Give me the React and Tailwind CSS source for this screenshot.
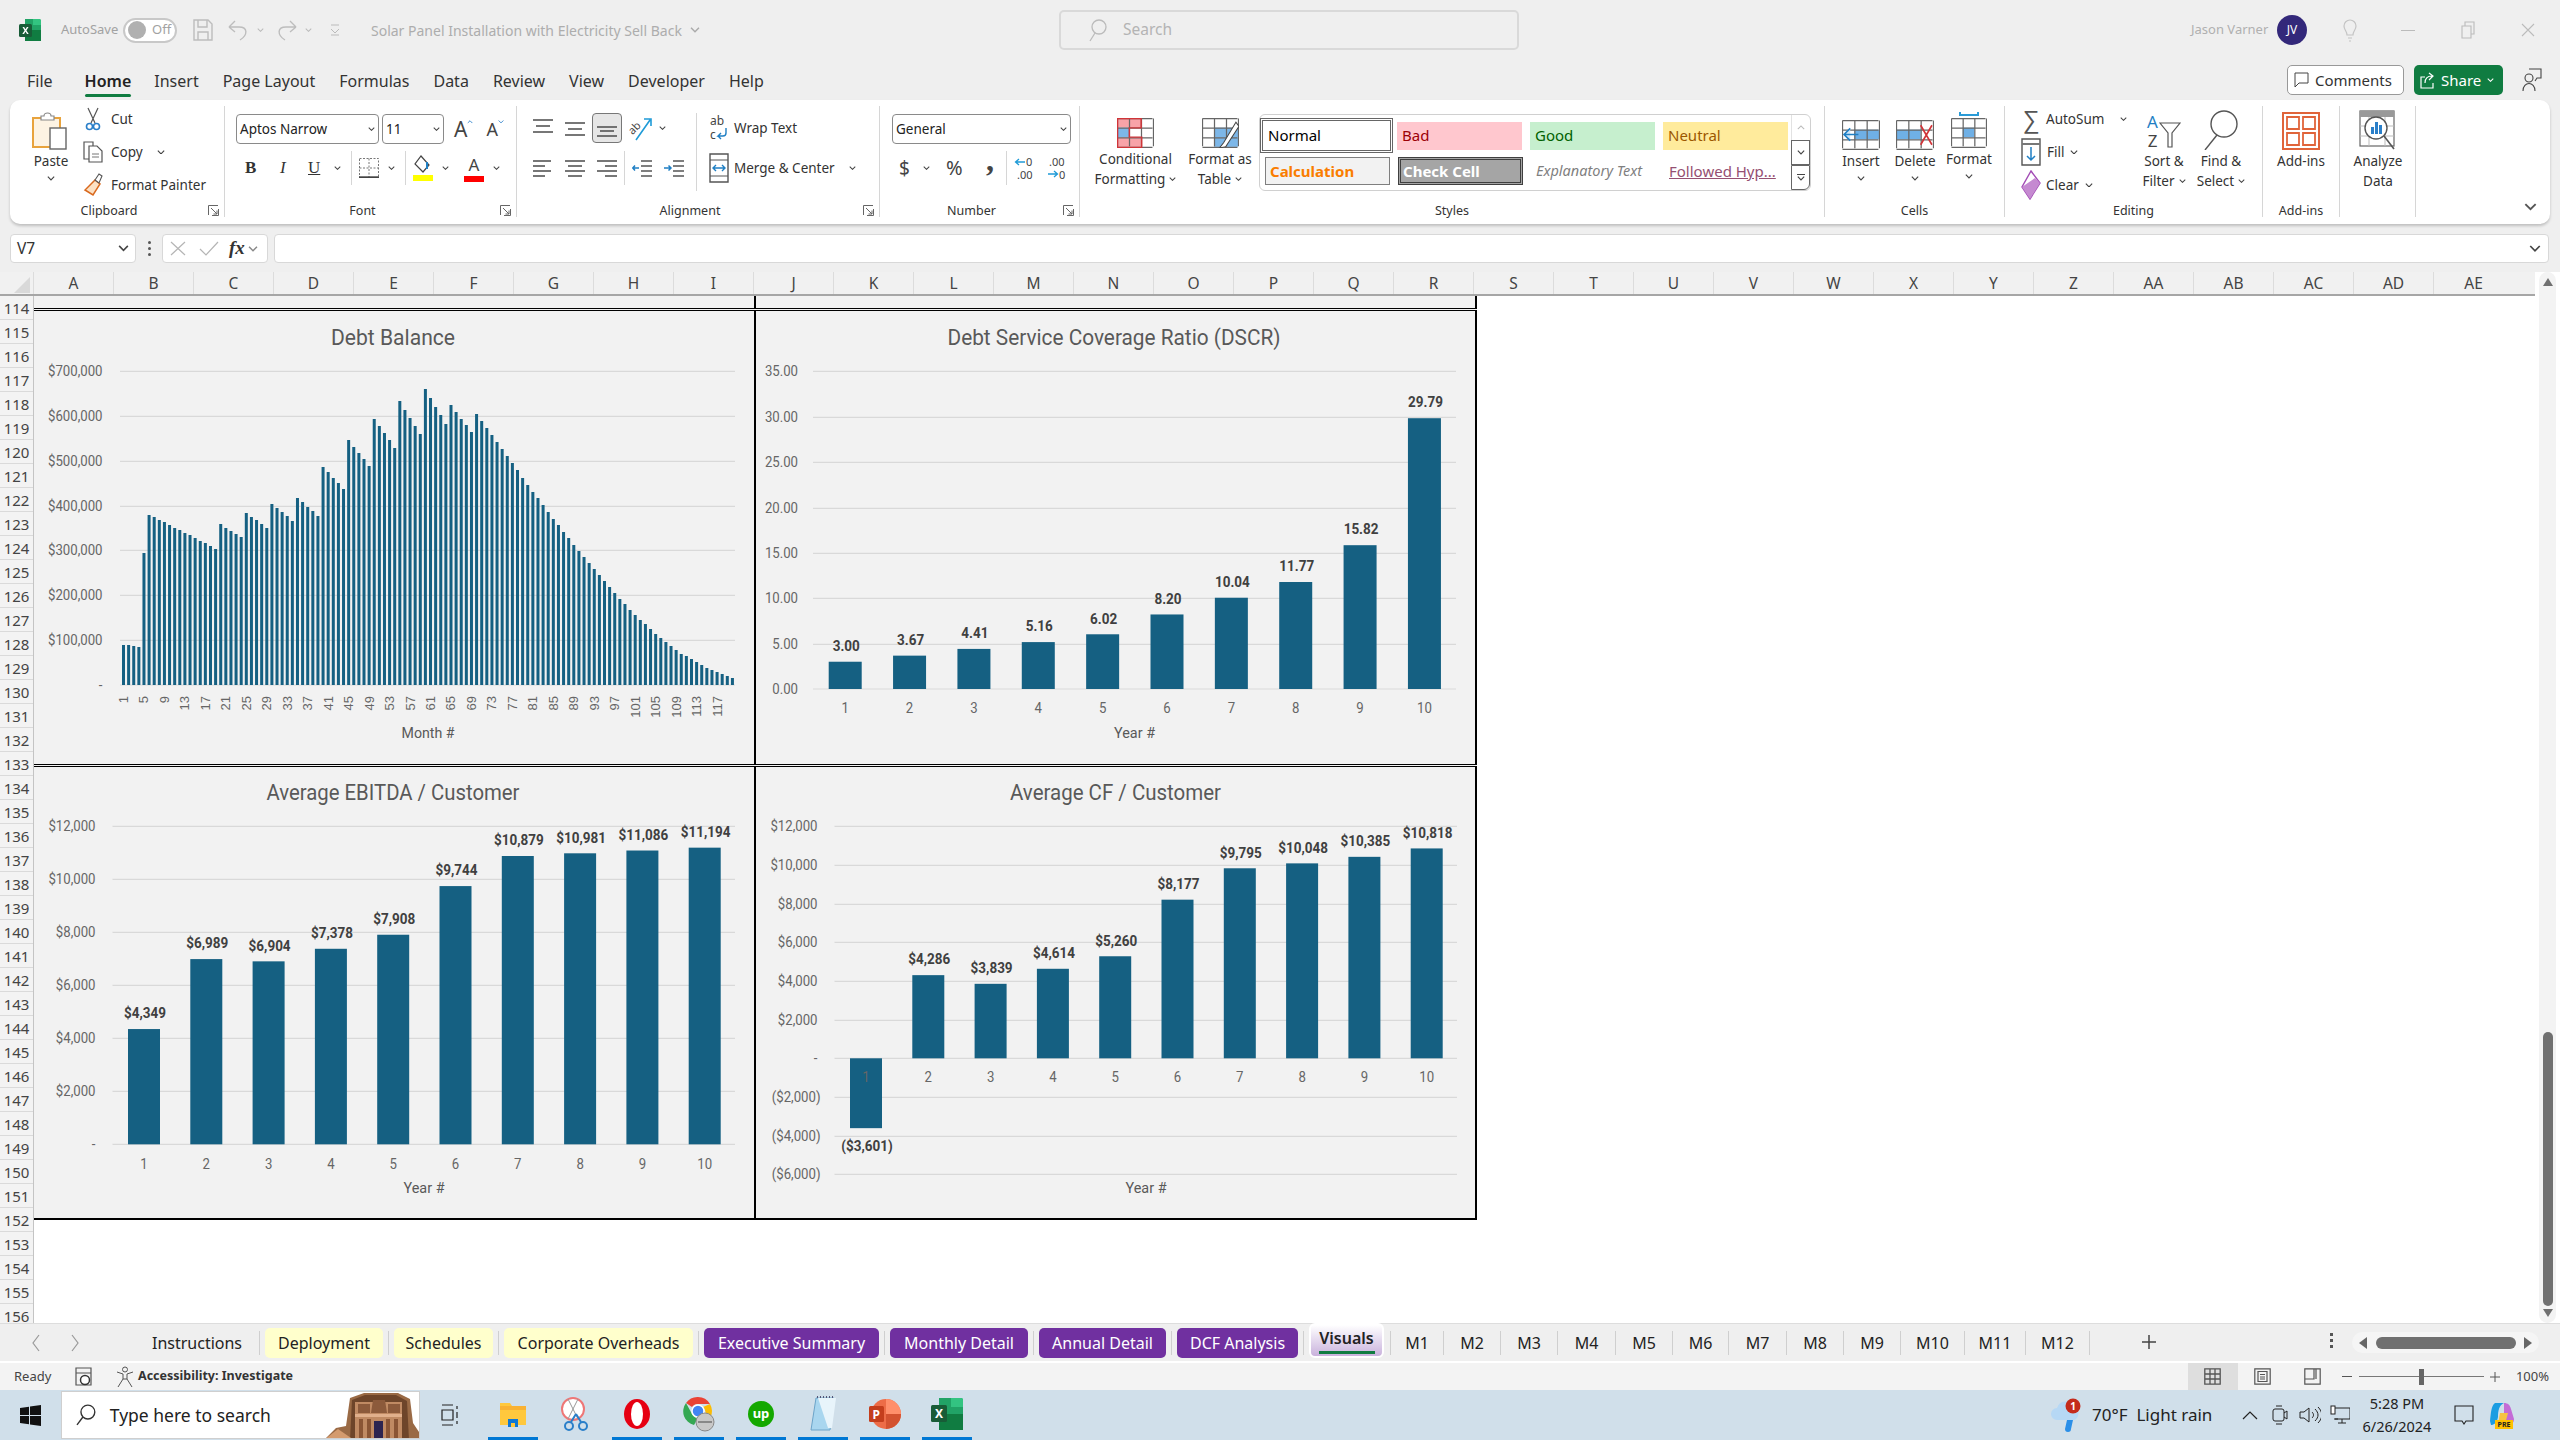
import { Fragment } from 'react';

const UI = "font-['Noto_Sans','Open_Sans',sans-serif]";
const CHART = "font-['Roboto','Liberation_Sans',sans-serif]";
const BAR = '#156082';

function Chev({ className = '', w = 8, color = '#444' }) {
  return (
    <svg width={w} height={w * 0.6} viewBox="0 0 8 5" className={className}>
      <path d="M.7.7 4 4 7.3.7" fill="none" stroke={color} strokeWidth="1.2" />
    </svg>
  );
}

function Launcher() {
  return (
    <svg width="11" height="11" viewBox="0 0 11 11" className="mb-[1px]">
      <path d="M.5 10V.5H10M10.5 4v6.5H4M3 3l6 6M5.5 9H9V5.5" fill="none" stroke="#666" strokeWidth="1" />
    </svg>
  );
}

function Group({ w, label, launcher, children, noLabel }) {
  return (
    <div style={{ width: w }} className="h-[111px] mt-[6px] border-r border-[#d6d6d6] flex flex-col shrink-0">
      <div className="h-[92px] flex">{children}</div>
      <div className="h-[19px] flex items-end">
        <div className="flex-1 text-center text-[12.5px] leading-[13px] text-[#333]">{noLabel ? '' : label}</div>
        {launcher && <div className="w-[16px] flex"><Launcher /></div>}
      </div>
    </div>
  );
}

function SmallRow({ icon, text, chev, gap = 8 }) {
  return (
    <div className="h-[26px] flex items-center">
      <div className="w-[20px] flex justify-center shrink-0">{icon}</div>
      <span style={{ marginLeft: gap }} className="text-[13.5px] text-[#333] whitespace-nowrap">{text}</span>
      {chev && <Chev className="shrink-0 ml-[6px]" />}
    </div>
  );
}

function BigButton({ w, icon, lines, chevBelow, noChev, top = 0, className = '' }) {
  return (
    <div style={{ width: w }} className={`flex flex-col items-center shrink-0 ${className}`}>
      <div style={{ height: 44, marginTop: top }} className="flex items-end justify-center">{icon}</div>
      <div className="text-[13.5px] leading-[20px] text-[#333] text-center mt-[1px] whitespace-nowrap">
        {lines.map((l, i) => (
          <div key={i} className="flex items-center justify-center gap-[4px]">
            {l}
            {i === lines.length - 1 && !chevBelow && !noChev && lines.length > 1 && <Chev w={7} />}
          </div>
        ))}
      </div>
      {chevBelow && <Chev w={8} className="mt-[5px]" />}
    </div>
  );
}

function Lines({ rows, stroke = '#555', w = 20, h = 18 }) {
  return (
    <svg width={w} height={h} viewBox={`0 0 ${w} ${h}`}>
      {rows.map(([y, x1, x2], i) => (
        <path key={i} d={`M${x1} ${y}H${x2}`} stroke={stroke} strokeWidth="1.6" />
      ))}
    </svg>
  );
}

function CellGrid({ w = 36, h = 30, cols = 3, rows = 3, fills = [], extra, className = '' }) {
  const cw = w / cols;
  const rh = h / rows;
  const lines = [];
  for (let i = 0; i <= cols; i++) lines.push(`M${i * cw + 0.5} 0.5V${h - 0.5}`);
  for (let i = 0; i <= rows; i++) lines.push(`M.5 ${i * rh + 0.5}H${w - 0.5}`);
  return (
    <svg width={w + 2} height={h + 2} viewBox={`0 0 ${w + 1} ${h + 1}`} className={className}>
      <rect width={w} height={h} fill="#fff" />
      {fills.map(([c, r, color, cs = 1, rs = 1], i) => (
        <rect key={i} x={c * cw} y={r * rh} width={cs * cw} height={rs * rh} fill={color} />
      ))}
      <path d={lines.join('')} stroke="#666" strokeWidth="1.2" fill="none" />
      {extra}
    </svg>
  );
}

function Ribbon() {
  return (
    <div className="mx-[10px] w-[2540px] h-[124px] bg-white rounded-[10px] shadow-[0_2px_3px_rgba(0,0,0,0.2)] flex relative">
      <Group w={215} label="Clipboard" launcher>
        <div className="w-[72px] pl-[6px]">
          <BigButton
            w={70}
            lines={['Paste']}
            chevBelow
            icon={
              <svg width="38" height="40" viewBox="0 0 38 40">
                <rect x="1" y="8" width="27" height="29" fill="#fdf3e3" stroke="#e8a33d" strokeWidth="2" />
                <path d="M9 10V6h3c0-4 7-4 7 0h3v4z" fill="#fff" stroke="#888" strokeWidth="1.2" />
                <rect x="18" y="18" width="16" height="21" fill="#fff" stroke="#666" strokeWidth="1.4" />
              </svg>
            }
          />
        </div>
        <div className="ml-[1px] flex flex-col gap-[7px]">
          <SmallRow
            text="Cut"
            icon={
              <svg width="16" height="24" viewBox="0 0 16 24">
                <path d="M3 1l7 15M13 1L6 16" stroke="#555" strokeWidth="1.2" />
                <circle cx="4.5" cy="19.5" r="3" fill="none" stroke="#2a7fc9" strokeWidth="1.6" />
                <circle cx="11.5" cy="19.5" r="3" fill="none" stroke="#2a7fc9" strokeWidth="1.6" />
              </svg>
            }
          />
          <div className="flex items-center">
            <SmallRow
              text="Copy"
              icon={
                <svg width="20" height="22" viewBox="0 0 20 22">
                  <path d="M1 1h9v17H1z" fill="#fff" stroke="#555" strokeWidth="1.2" />
                  <path d="M6 5h8l5 5v11H6z" fill="#fff" stroke="#555" strokeWidth="1.2" />
                  <path d="M9 13h7M9 16h7" stroke="#777" />
                </svg>
              }
            />
            <Chev className="ml-[14px]" />
          </div>
          <SmallRow
            text="Format Painter"
            icon={
              <svg width="20" height="24" viewBox="0 0 20 24">
                <path d="M12 7l5 4-7 11-8-5z" fill="#fce1c4" stroke="#d9691e" strokeWidth="1.5" />
                <path d="M12 7l4-6 3 2-3 7z" fill="#fff" stroke="#555" strokeWidth="1.1" />
              </svg>
            }
          />
        </div>
      </Group>

      <Group w={292} label="Font" launcher>
        <div className="flex flex-col pl-[11px] pt-[8px] gap-[9px]">
          <div className="flex items-center h-[30px]">
            <div className="w-[143px] h-[30px] border border-[#8a8a8a] rounded-[4px] flex items-center justify-between px-[3px] text-[13.5px] text-[#222]">
              Aptos Narrow
              <Chev w={7} />
            </div>
            <div className="ml-[3px] w-[62px] h-[30px] border border-[#8a8a8a] rounded-[4px] flex items-center justify-between px-[3px] text-[13.5px] text-[#222]">
              11
              <Chev w={7} />
            </div>
            <span className="ml-[10px] text-[21px] leading-[28px] text-[#444]">A</span>
            <Chev w={6} color="#2a7fc9" className="rotate-180 -mt-[14px]" />
            <span className="ml-[13px] text-[18px] leading-[26px] text-[#444]">A</span>
            <Chev w={6} color="#2a7fc9" className="-mt-[14px]" />
          </div>
          <div className="flex items-center h-[30px] pl-[9px] text-[#333]">
            <span className="w-[35px] font-['Liberation_Serif',serif] font-bold text-[17px]">B</span>
            <span className="w-[28px] font-['Liberation_Serif',serif] italic text-[17px]">I</span>
            <span className="w-[26px] font-['Liberation_Serif',serif] underline text-[17px]">U</span>
            <Chev w={7} className="mr-[10px]" />
            <div className="w-px h-[34px] bg-[#d6d6d6] mr-[7px]" />
            <svg width="20" height="20" viewBox="0 0 20 20" className="mr-[9px]">
              <path d="M.5.5h19v19H.5zM10 .5v19M.5 10h19" fill="none" stroke="#777" strokeDasharray="2 1.5" />
              <path d="M0 19.2h20" stroke="#444" strokeWidth="1.8" />
            </svg>
            <Chev w={7} className="mr-[10px]" />
            <div className="w-px h-[34px] bg-[#d6d6d6] mr-[6px]" />
            <svg width="22" height="28" viewBox="0 0 22 28" className="mr-[8px]">
              <path d="M9 2l8 9-6 7-8-8z" fill="#fff" stroke="#444" strokeWidth="1.2" />
              <path d="M15 8v7" stroke="#1f7fc4" strokeWidth="2" />
              <rect x="1" y="21" width="20" height="6" fill="#ffff00" />
            </svg>
            <Chev w={7} className="mr-[15px]" />
            <div className="flex flex-col items-center w-[20px] mr-[9px]">
              <span className="text-[17px] leading-[22px] text-[#444]">A</span>
              <div className="w-[20px] h-[6px] bg-[#ff0000]" />
            </div>
            <Chev w={7} />
          </div>
        </div>
      </Group>

      <Group w={363} label="Alignment" launcher>
        <div className="w-[179px] shrink-0 flex flex-col pl-[16px] pt-[7px] gap-[10px]">
          <div className="flex items-center h-[30px]">
            <Lines rows={[[1, 0, 20], [7, 3, 17], [13, 0, 20]]} />
            <div className="ml-[12px]"><Lines rows={[[4, 0, 20], [10, 3, 17], [16, 0, 20]]} /></div>
            <div className="ml-[7px] w-[30px] h-[30px] border border-[#777] rounded-[4px] bg-[#e6e6e6] flex items-center justify-center">
              <Lines rows={[[8, 0, 20], [12, 3, 17], [17, 0, 20]]} />
            </div>
            <svg width="26" height="26" viewBox="0 0 26 26" className="ml-[6px] overflow-visible">
              <text x="1" y="16" transform="rotate(-45 8 14)" className="text-[11px] fill-[#444]">ab</text>
              <path d="M8 25L22 5M16 4h7v7" fill="none" stroke="#1f9bd7" strokeWidth="1.6" />
            </svg>
            <Chev w={7} className="ml-[5px]" />
          </div>
          <div className="flex items-center h-[30px]">
            <Lines rows={[[2, 0, 18], [7, 0, 12], [12, 0, 18], [17, 0, 12]]} />
            <div className="ml-[12px]"><Lines rows={[[2, 0, 20], [7, 3, 17], [12, 0, 20], [17, 3, 17]]} /></div>
            <div className="ml-[12px]"><Lines rows={[[2, 0, 20], [7, 8, 20], [12, 0, 20], [17, 8, 20]]} /></div>
            <div className="w-px h-[34px] bg-[#d6d6d6] mx-[7px]" />
            <svg width="20" height="18" viewBox="0 0 20 18">
              <path d="M9 2h11M9 7h11M9 12h11M9 17h11" stroke="#555" strokeWidth="1.5" />
              <path d="M7 9H1M3 6.5 .8 9 3 11.5" fill="none" stroke="#1f7fc4" strokeWidth="1.5" />
            </svg>
            <svg width="20" height="18" viewBox="0 0 20 18" className="ml-[12px]">
              <path d="M9 2h11M9 7h11M9 12h11M9 17h11" stroke="#555" strokeWidth="1.5" />
              <path d="M0 9h6M4.5 6.5 7 9l-2.500 2.500" fill="none" stroke="#1f7fc4" strokeWidth="1.5" />
            </svg>
          </div>
        </div>
        <div className="w-px h-[78px] mt-[7px] bg-[#d6d6d6] shrink-0" />
        <div className="flex flex-col pl-[12px] pt-[7px] gap-[10px]">
          <div className="flex items-center h-[30px]">
            <svg width="20" height="28" viewBox="0 0 20 28" className="overflow-visible">
              <text x="1" y="11" className="text-[12px] fill-[#444]">ab</text>
              <text x="1" y="25" className="text-[12px] fill-[#444]">c</text>
              <path d="M17 14v5a3 3 0 0 1-3 3H9l3-3M9 22l3 3" fill="none" stroke="#1f7fc4" strokeWidth="1.4" />
            </svg>
            <span className="ml-[5px] text-[13.5px] text-[#333]">Wrap Text</span>
          </div>
          <div className="flex items-center h-[30px]">
            <svg width="20" height="32" viewBox="0 0 20 32">
              <path d="M1 2h18v28H1z" fill="#fff" stroke="#555" strokeWidth="1.4" />
              <path d="M1 8h18M1 24h18" stroke="#555" />
              <path d="M4 16h12M7 13l-3 3 3 3M13 13l3 3-3 3" fill="none" stroke="#1f7fc4" strokeWidth="1.4" />
            </svg>
            <span className="ml-[5px] text-[13.5px] text-[#333] whitespace-nowrap">Merge &amp; Center</span>
            <Chev w={7} className="ml-[14px]" />
          </div>
        </div>
      </Group>

      <Group w={200} label="Number" launcher>
        <div className="flex flex-col pl-[12px] pt-[8px] gap-[9px]">
          <div className="w-[179px] h-[30px] border border-[#8a8a8a] rounded-[4px] flex items-center justify-between px-[3px] text-[13.5px] text-[#222]">
            General
            <Chev w={7} />
          </div>
          <div className="flex items-center h-[30px] pl-[7px] text-[#444]">
            <span className="w-[24px] text-[19px]">$</span>
            <Chev w={7} className="mr-[16px]" />
            <span className="w-[40px] text-[20px]">%</span>
            <span className="w-[20px] -mt-[16px] font-['Liberation_Serif',serif] font-bold text-[32px] leading-[36px]">,</span>
            <div className="w-px h-[34px] bg-[#d6d6d6] mr-[7px]" />
            <svg width="22" height="26" viewBox="0 0 22 26" className="mr-[10px]">
              <text x="12" y="11" className="text-[11px] fill-[#444]">0</text>
              <text x="3" y="24" className="text-[11px] fill-[#444]">.00</text>
              <path d="M11 7H2M5 4 1.500 7 5 10" fill="none" stroke="#1f9bd7" strokeWidth="1.3" />
            </svg>
            <svg width="22" height="26" viewBox="0 0 22 26">
              <text x="3" y="11" className="text-[11px] fill-[#444]">.00</text>
              <text x="13" y="24" className="text-[11px] fill-[#444]">0</text>
              <path d="M2 19h9M8 16l3.500 3L8 22" fill="none" stroke="#1f9bd7" strokeWidth="1.3" />
            </svg>
          </div>
        </div>
      </Group>

      <Group w={745} label="Styles">
        <BigButton
          w={83}
          className="ml-[14px]"
          top={-2}
          lines={['Conditional', 'Formatting']}
          icon={
            <CellGrid
              w={35}
              h={28}
              fills={[[0, 0, '#f8a3a8', 2, 1], [0, 1, '#7db7e8'], [0, 2, '#f8a3a8', 2, 1]]}
              extra={<path d="M.5.5h23v9H12v9h12v10H.5z" fill="none" stroke="#d13438" strokeWidth="1.4" />}
            />
          }
        />
        <BigButton
          w={70}
          className="ml-[8px] mr-[4px]"
          top={-2}
          lines={['Format as', 'Table']}
          icon={
            <CellGrid
              w={35}
              h={28}
              fills={[[1, 1, '#7db7e8', 2, 1], [1, 2, '#7db7e8', 2, 1]]}
              extra={<path d="M33 4 21 24l-4 5 6-1L36 8z" fill="#fff" stroke="#444" strokeWidth="1" />}
            />
          }
        />
        <div className="w-[552px] h-[77px] mt-[8px] border border-[#d0d0d0] rounded-[6px] flex text-[15px]">
          <div className="flex-1 flex flex-col">
            <div className="flex items-center h-[41px]">
              <div className="w-[133px] h-[35px] border-[3px] border-double border-[#666] bg-white flex items-center pl-[5px] text-black">Normal</div>
              <div className="ml-[4px] w-[125px] h-[28px] bg-[#ffc7ce] text-[#9c0006] flex items-center pl-[5px]">Bad</div>
              <div className="ml-[8px] w-[125px] h-[28px] bg-[#c6efce] text-[#006100] flex items-center pl-[5px]">Good</div>
              <div className="ml-[8px] w-[125px] h-[28px] bg-[#ffeb9c] text-[#9c5700] flex items-center pl-[5px]">Neutral</div>
            </div>
            <div className="flex items-center h-[28px] mt-[1px]">
              <div className="ml-[5px] w-[125px] h-[28px] bg-[#f2f2f2] border border-[#7f7f7f] text-[#fa7d00] font-bold flex items-center pl-[4px]">Calculation</div>
              <div className="ml-[8px] w-[125px] h-[28px] bg-[#a5a5a5] border-[3px] border-double border-[#3f3f3f] text-white font-bold flex items-center pl-[2px]">Check Cell</div>
              <div className="ml-[8px] w-[125px] h-[28px] text-[#7f7f7f] italic flex items-center pl-[5px] text-[14.5px] whitespace-nowrap">Explanatory Text</div>
              <div className="ml-[8px] w-[125px] h-[28px] text-[#954f72] underline flex items-center pl-[5px] whitespace-nowrap">Followed Hyp...</div>
            </div>
          </div>
          <div className="w-[19px] flex flex-col">
            <div className="h-[25px] border-l border-[#e2e2e2] flex items-center justify-center"><Chev w={8} color="#bbb" className="rotate-180" /></div>
            <div className="h-[25px] border border-[#666] flex items-center justify-center"><Chev w={8} /></div>
            <div className="flex-1 border border-[#666] rounded-br-[6px] flex flex-col items-center justify-center gap-[1px]">
              <div className="w-[8px] h-px bg-[#444]" />
              <Chev w={8} />
            </div>
          </div>
        </div>
      </Group>

      <Group w={180} label="Cells">
        <BigButton
          w={54}
          className="ml-[9px]"
          lines={['Insert']}
          chevBelow
          icon={
            <CellGrid
              w={36}
              h={28}
              fills={[[1, 1, '#6fb0e6', 2, 1]]}
              extra={<path d="M16 14H2M8 8l-6 6 6 6" fill="#cfe6f9" stroke="#1f7fc4" strokeWidth="1.6" />}
            />
          }
        />
        <BigButton
          w={54}
          lines={['Delete']}
          chevBelow
          icon={
            <CellGrid
              w={36}
              h={28}
              fills={[[0, 1, '#6fb0e6', 2, 1]]}
              extra={<path d="M24 5l11 19M35 5 24 24" stroke="#d13438" strokeWidth="1.6" />}
            />
          }
        />
        <BigButton
          w={54}
          lines={['Format']}
          chevBelow
          top={-2}
          icon={
            <div className="flex flex-col items-center gap-[2px]">
              <div className="w-[20px] h-[4px] border-x-2 border-b-2 border-[#2a9bd7]" />
              <CellGrid w={34} h={28} fills={[[1, 1, '#6fb0e6', 1, 1]]} />
            </div>
          }
        />
      </Group>

      <Group w={258} label="Editing">
        <div className="flex flex-col gap-[7px] pl-[16px] w-[130px]">
          <div className="h-[26px] flex items-center">
            <span className="w-[20px] text-center text-[24px] leading-[26px] text-[#555]">∑</span>
            <span className="ml-[5px] text-[13.5px] text-[#333]">AutoSum</span>
            <Chev w={7} className="ml-[16px]" />
          </div>
          <SmallRow
            gap={6}
            text="Fill"
            chev
            icon={
              <svg width="20" height="28" viewBox="0 0 20 28">
                <path d="M1 1h18v26H1z" fill="#fff" stroke="#555" strokeWidth="1.4" />
                <path d="M1 6h18" stroke="#777" strokeWidth="2" />
                <path d="M10 9v13M6 18l4 4 4-4" fill="none" stroke="#1f7fc4" strokeWidth="1.5" />
              </svg>
            }
          />
          <SmallRow
            gap={5}
            text="Clear"
            chev
            icon={
              <svg width="20" height="30" viewBox="0 0 20 30">
                <path d="M10 1 19 13 9 29 1 17z" fill="#fff" stroke="#a24bb5" strokeWidth="1.4" />
                <path d="M1 17 14 8 19 13 9 29z" fill="#c58ad1" />
              </svg>
            }
          />
        </div>
        <BigButton
          w={58}
          lines={['Sort &', 'Filter']}
          icon={
            <div className="flex items-center">
              <div className="flex flex-col text-[17px] leading-[19px] text-center">
                <span className="text-[#1f7fc4]">A</span>
                <span className="text-[#444]">Z</span>
              </div>
              <svg width="22" height="26" viewBox="0 0 22 26" className="mt-[8px] ml-[1px]">
                <path d="M1 1h20l-8 10v14H9V11z" fill="#fff" stroke="#555" strokeWidth="1.2" />
              </svg>
            </div>
          }
        />
        <BigButton
          w={56}
          lines={['Find &', 'Select']}
          icon={
            <svg width="38" height="40" viewBox="0 0 38 40">
              <circle cx="22" cy="14" r="13" fill="#fff" stroke="#555" strokeWidth="1.4" />
              <path d="M15 25 3 40" stroke="#555" strokeWidth="1.4" />
            </svg>
          }
        />
      </Group>

      <Group w={77} label="Add-ins">
        <BigButton
          w={76}
          lines={['Add-ins']}
          icon={
            <svg width="38" height="38" viewBox="0 0 38 38">
              <rect x="1" y="1" width="36" height="36" fill="#fff" stroke="#e0643a" strokeWidth="2" />
              <path d="M5 5h12v12H5zM21 5h12v12H21zM5 21h12v12H5zM21 21h12v12H21z" fill="none" stroke="#e0643a" strokeWidth="1.8" />
            </svg>
          }
        />
      </Group>

      <Group w={76} noLabel>
        <BigButton
          w={76}
          noChev
          lines={['Analyze', 'Data']}
          icon={
            <svg width="38" height="40" viewBox="0 0 38 40">
              <rect x="1" y="1" width="34" height="35" fill="#fff" stroke="#666" strokeWidth="1.2" />
              <rect x="1" y="1" width="34" height="6" fill="#999" />
              <path d="M1 16h34M1 26h34M10 7v29M26 7v29" stroke="#bbb" />
              <circle cx="17" cy="18" r="11" fill="#fff" stroke="#555" strokeWidth="1.4" />
              <path d="M12 24v-7h3v7zM16 24V12h3v12zM20 24v-9h3v9z" fill="#2a7fc9" />
              <path d="M25 26l10 13" stroke="#555" strokeWidth="1.6" />
            </svg>
          }
        />
      </Group>

      <div className="flex-1 flex justify-end items-end pb-[13px] pr-[13px]">
        <Chev w={13} color="#555" />
      </div>
    </div>
  );
}

function TitleBar() {
  return (
    <div className="h-[60px] flex items-center text-[13.5px] text-[#a2a2a2]">
      <svg width="22" height="22" viewBox="0 0 22 22" className="ml-[19px]">
        <path d="M6 0h14a2 2 0 0 1 2 2v18a2 2 0 0 1-2 2H6z" fill="#21a366" />
        <path d="M14 0h6a2 2 0 0 1 2 2v4h-8z" fill="#33c481" />
        <path d="M6 11h16v11H6z" fill="#107c41" />
        <rect y="5" width="13" height="13" rx="1.500" fill="#185c37" />
        <path d="M3.500 8l2.100 3.400-2.300 3.600h1.700l1.500-2.500 1.500 2.500h1.700L7.400 11.400 9.500 8H7.900L6.500 10.300 5.100 8z" fill="#fff" />
      </svg>
      <span className="ml-[20px] w-[62px] text-[13px]">AutoSave</span>
      <div className="w-[54px] h-[25px] rounded-full border-2 border-[#c8c8c8] bg-white flex items-center pl-[3px] gap-[6px] text-[13px]">
        <div className="w-[18px] h-[18px] rounded-full bg-[#b0b0b0]" />
        Off
      </div>
      <svg width="20" height="22" viewBox="0 0 20 22" className="ml-[16px]">
        <path d="M1 1h14l4 4v16H1zM5 1v7h9V1M5 21v-8h10v8" fill="none" stroke="#bdbdbd" strokeWidth="1.4" />
      </svg>
      <svg width="20" height="22" viewBox="0 0 20 22" className="ml-[15px]">
        <path d="M1 8h10c9 0 9 8 1 13M1 8l6-6M1 8l6 5" fill="none" stroke="#bdbdbd" strokeWidth="1.4" />
      </svg>
      <Chev w={7} color="#bbb" className="ml-[9px]" />
      <svg width="20" height="22" viewBox="0 0 20 22" className="ml-[13px]">
        <path d="M19 8H9C0 8 0 16 8 21M19 8l-6-6M19 8l-6 5" fill="none" stroke="#bdbdbd" strokeWidth="1.4" />
      </svg>
      <Chev w={7} color="#bbb" className="ml-[8px]" />
      <svg width="10" height="12" viewBox="0 0 10 12" className="ml-[18px]">
        <path d="M1 1h8M1 5l4 4 4-4M1 11h8" fill="none" stroke="#bbb" />
      </svg>
      <span className="ml-[31px] w-[314px] whitespace-nowrap text-[14px] text-[#adadad]">Solar Panel Installation with Electricity Sell Back</span>
      <Chev w={10} color="#aaa" className="ml-[5px]" />
      <div className="ml-[359px] w-[460px] h-[40px] border-2 border-[#d9d9d9] rounded-[5px] flex items-center pl-[28px] text-[15.5px]">
        <svg width="18" height="24" viewBox="0 0 18 24">
          <circle cx="10" cy="9" r="7" fill="none" stroke="#bbb" strokeWidth="1.3" />
          <path d="M6 15 1 23" stroke="#bbb" strokeWidth="1.3" />
        </svg>
        <span className="ml-[16px] text-[#b4b4b4]">Search</span>
      </div>
      <span className="ml-[672px] w-[76px] text-[13px] whitespace-nowrap text-[#b0b0b0]">Jason Varner</span>
      <div className="ml-[10px] w-[30px] h-[30px] rounded-full bg-[#33287a] flex items-center justify-center text-white text-[12px]">JV</div>
      <svg width="14" height="24" viewBox="0 0 14 24" className="ml-[36px]">
        <path d="M4 17c0-4-3-5-3-9a6 6 0 0 1 12 0c0 4-3 5-3 9zM5 20h4M6 23h2" fill="none" stroke="#c4c4c4" strokeWidth="1.2" />
      </svg>
      <div className="ml-[44px] w-[14px] h-px bg-[#bbb]" />
      <svg width="14" height="18" viewBox="0 0 14 18" className="ml-[46px]">
        <path d="M1 5h9v12H1zM4 5V1h9v12h-3" fill="none" stroke="#bbb" strokeWidth="1.1" />
      </svg>
      <svg width="14" height="14" viewBox="0 0 14 14" className="ml-[46px]">
        <path d="M1 1l12 12M13 1 1 13" stroke="#bbb" strokeWidth="1.1" />
      </svg>
    </div>
  );
}

const MENU = ['Insert', 'Page Layout', 'Formulas', 'Data', 'Review', 'View', 'Developer', 'Help'];

function MenuBar() {
  return (
    <div className="h-[40px] flex items-center pl-[27px] pt-[2px] text-[16px] text-[#333]">
      <span className="mr-[32px]">File</span>
      <span className="relative font-semibold text-[#222] mr-[23px]">
        Home
        <div className="absolute left-0 right-0 -bottom-[4px] h-[3px] rounded bg-[#107c41]" />
      </span>
      <div className="flex gap-[24px]">
        {MENU.map((m) => (
          <span key={m}>{m}</span>
        ))}
      </div>
      <div className="ml-auto flex items-center -mt-[2px]">
        <div className="w-[117px] h-[30px] bg-white border border-[#999] rounded-[5px] flex items-center pl-[6px] gap-[6px] text-[15px]">
          <svg width="15" height="16" viewBox="0 0 15 16">
            <path d="M1 1h13v10H5l-4 4z" fill="none" stroke="#444" />
          </svg>
          Comments
        </div>
        <div className="ml-[10px] w-[89px] h-[30px] bg-[#107c41] rounded-[5px] flex items-center pl-[6px] gap-[6px] text-white text-[15px]">
          <svg width="15" height="18" viewBox="0 0 15 18">
            <path d="M5 6H1v11h12v-5M5 12c0-5 3-7 7-7M9 2l4 3-4 4" fill="none" stroke="#fff" strokeWidth="1.200" />
          </svg>
          Share
          <Chev w={7} color="#fff" />
        </div>
        <svg width="20" height="24" viewBox="0 0 20 24" className="ml-[19px] mr-[18px]">
          <circle cx="7" cy="10" r="4" fill="none" stroke="#444" strokeWidth="1.1" />
          <path d="M1 23c0-10 12-10 12 0M7 1h12v9h-4l-2 3" fill="none" stroke="#444" strokeWidth="1.1" />
        </svg>
      </div>
    </div>
  );
}

function FormulaBar() {
  return (
    <div className="h-[29px] mt-[10px] flex text-[15.5px] text-[#333]">
      <div className="ml-[10px] w-[126px] bg-white border border-[#d8d8d8] rounded-[4px] flex items-center justify-between pl-[6px] pr-[6px]">
        V7
        <Chev w={11} />
      </div>
      <div className="w-[26px] flex flex-col items-center justify-center gap-[3px]">
        <div className="w-[3px] h-[3px] bg-[#555] rounded-full" />
        <div className="w-[3px] h-[3px] bg-[#555] rounded-full" />
        <div className="w-[3px] h-[3px] bg-[#555] rounded-full" />
      </div>
      <div className="w-[106px] bg-white border border-[#d8d8d8] rounded-[4px] flex items-center pl-[7px]">
        <svg width="16" height="15" viewBox="0 0 16 15">
          <path d="M1 1l14 13M15 1 1 14" stroke="#b5b5b5" strokeWidth="1.2" />
        </svg>
        <svg width="20" height="15" viewBox="0 0 20 15" className="ml-[13px]">
          <path d="M1 8l6 6L19 1" fill="none" stroke="#b5b5b5" strokeWidth="1.2" />
        </svg>
        <span className="ml-[10px] font-['Liberation_Serif',serif] italic font-bold text-[19px] text-[#333]">fx</span>
        <Chev w={10} color="#888" className="ml-[3px]" />
      </div>
      <div className="ml-[6px] flex-1 mr-[11px] bg-white border border-[#d8d8d8] rounded-[4px] flex items-center justify-end pr-[7px]">
        <Chev w={12} />
      </div>
    </div>
  );
}

const COLS = 'A B C D E F G H I J K L M N O P Q R S T U V W X Y Z AA AB AC AD AE'.split(' ');
const ROWS = Array.from({ length: 43 }, (_, i) => 114 + i);

const DEBT = [
  40, 40, 39, 38, 132, 170, 168, 165, 163, 160, 157, 155, 152, 150, 147, 144, 142, 139, 136, 161,
  157, 154, 151, 148, 172, 168, 165, 161, 157, 181, 177, 173, 169, 164, 187, 183, 178, 174, 169, 218,
  213, 207, 202, 196, 245, 238, 232, 226, 219, 266, 259, 252, 245, 237, 284, 275, 267, 259, 251, 296,
  287, 278, 270, 261, 280, 273, 266, 260, 253, 271, 264, 257, 250, 243, 236, 229, 222, 215, 207, 200,
  193, 187, 180, 173, 166, 160, 153, 147, 140, 134, 128, 122, 116, 110, 104, 98, 92, 86, 81, 75,
  70, 65, 61, 56, 51, 47, 43, 39, 35, 31, 29, 26, 23, 20, 17, 15, 13, 11, 9, 7,
];

// Aptos Narrow is not installed, so chart text is squeezed horizontally
function T({ x, y, sx = 1, anchor = 'middle', className, len, children }) {
  return (
    <text
      transform={`translate(${x} ${y}) scale(${sx} 1)`}
      textAnchor={anchor}
      dominantBaseline="central"
      textLength={len}
      lengthAdjust={len ? 'spacingAndGlyphs' : undefined}
      className={className}
    >
      {children}
    </text>
  );
}

const AXIS = 'text-[15px] fill-[#666]';
const DATA_LABEL = 'text-[15px] font-bold fill-[#404040]';
const TITLE = 'text-[22px] fill-[#595959]';
const AXIS_TITLE = 'text-[15.500px] fill-[#595959]';

function DebtChart() {
  const ticks = [
    ['$700,000', 371.3], ['$600,000', 416.3], ['$500,000', 461.3], ['$400,000', 506.3],
    ['$300,000', 550.3], ['$200,000', 595.3], ['$100,000', 640.3], ['-', 685],
  ];
  return (
    <svg viewBox="34 311 720 453" className={`w-[720px] h-[453px] block ${CHART}`}>
      <T x={393} y={337} len={124} className={TITLE}>Debt Balance</T>
      {ticks.map(([t, y]) => (
        <Fragment key={t}>
          <path d={`M120 ${y}H735`} stroke="#d9d9d9" strokeWidth="1.2" />
          <T x={102.5} y={y - 0.7} sx={0.88} anchor="end" className={AXIS}>{t}</T>
        </Fragment>
      ))}
      {DEBT.map((h, i) => (
        <rect key={i} x={122 + i * 5.117} y={685 - h} width="3" height={h} fill={BAR} />
      ))}
      {DEBT.map((_, i) =>
        i % 4 === 0 ? (
          <text
            key={i}
            transform={`translate(${123.5 + i * 5.117} 696) rotate(-90)`}
            textAnchor="end"
            dominantBaseline="central"
            className="text-[13px] fill-[#666] font-['Liberation_Sans',sans-serif]"
          >
            {i + 1}
          </text>
        ) : null,
      )}
      <T x={428} y={733} len={53} className={AXIS_TITLE}>Month #</T>
    </svg>
  );
}

function ColumnChart({ vb, title, titleLen, titleX, titleY, grid, ticks, tickX, zero, scale, first, step, values, fmt, catY, axisX, axisY, w = 32 }) {
  const [, , width, height] = vb;
  return (
    <svg viewBox={vb.join(' ')} style={{ width, height }} className={`block ${CHART}`}>
      <T x={titleX} y={titleY} len={titleLen} className={TITLE}>{title}</T>
      {ticks.map(([t, ty]) => (
        <Fragment key={t}>
          <path d={`M${grid[0]} ${ty}H${grid[1]}`} stroke="#d9d9d9" strokeWidth="1.2" />
          <T x={t.startsWith('(') ? tickX + 3 : tickX} y={ty - 0.7} sx={0.88} anchor="end" className={AXIS}>{t}</T>
        </Fragment>
      ))}
      {values.map((v, i) => {
        const cx = first + i * step;
        const h = Math.abs(v) * scale;
        const top = v >= 0 ? zero - h : zero;
        return (
          <Fragment key={i}>
            <rect x={cx - w / 2} y={top} width={w} height={h} fill={BAR} />
            <T x={cx + 1} y={v >= 0 ? top - 16 : top + h + 17.5} sx={0.9} className={DATA_LABEL}>{fmt(v)}</T>
            <T x={cx} y={catY} sx={0.88} className={AXIS}>{i + 1}</T>
          </Fragment>
        );
      })}
      <T x={axisX} y={axisY} len={41} className={AXIS_TITLE}>Year #</T>
    </svg>
  );
}

const money = (v) => (v < 0 ? `($${Math.abs(v).toLocaleString('en-US')})` : `$${v.toLocaleString('en-US')}`);

function Sheet() {
  return (
    <div className="flex-1 flex flex-col bg-white min-w-0">
      <div className="h-[24px] flex bg-[#f1f1f1] border-b-2 border-[#a6a6a6]">
        <div className="w-[33px] flex items-end justify-end pr-[3px] pb-[1px]">
          <svg width="16" height="16" viewBox="0 0 16 16"><path d="M16 0v16H0z" fill="#d9d9d9" /></svg>
        </div>
        {COLS.map((c) => (
          <div key={c} className="w-[80px] shrink-0 border-l border-[#dcdcdc] text-center text-[15.500px] leading-[22px] text-[#444]">{c}</div>
        ))}
      </div>
      <div className="flex-1 flex overflow-hidden">
        <div className="w-[34px] shrink-0 bg-[#f3f3f3] border-r border-[#c4c4c4] h-[1027px] overflow-hidden">
          {ROWS.map((r) => (
            <div key={r} className="h-[24px] border-b border-[#dadada] text-center text-[15px] leading-[24px] text-[#444]">{r}</div>
          ))}
        </div>
        <div className="flex flex-col">
          <div className="h-[12px] w-[1443px] bg-[#f2f2f2] flex border-r-2 border-black">
            <div className="w-[722px] border-r-2 border-black" />
          </div>
          <div className="flex border-t-[3px] border-double border-black w-[1443px] bg-[#f2f2f2]">
            <div className="w-[722px] border-r-2 border-black"><DebtChart /></div>
            <div className="w-[721px] border-r-2 border-black">
              <ColumnChart
                vb={[756, 311, 719, 453]}
                title="Debt Service Coverage Ratio (DSCR)"
                titleLen={333}
                titleX={1114}
                titleY={337}
                grid={[813, 1456]}
                tickX={798}
                ticks={[['35.00', 371.3], ['30.00', 417.3], ['25.00', 462.3], ['20.00', 508.3], ['15.00', 553.3], ['10.00', 598.3], ['5.00', 644.3], ['0.00', 689]]}
                zero={689}
                scale={9.09}
                first={845.2}
                step={64.36}
                w={33}
                values={[3.0, 3.67, 4.41, 5.16, 6.02, 8.2, 10.04, 11.77, 15.82, 29.79]}
                fmt={(v) => v.toFixed(2)}
                catY={708}
                axisX={1134.5}
                axisY={733}
              />
            </div>
          </div>
          <div className="flex border-t-[3px] border-double border-black border-b-2 border-b-black w-[1443px] bg-[#f2f2f2]">
            <div className="w-[722px] border-r-2 border-black">
              <ColumnChart
                vb={[34, 767, 720, 451]}
                title="Average EBITDA / Customer"
                titleLen={253}
                titleX={393}
                titleY={792}
                grid={[112.5, 735]}
                tickX={95.5}
                ticks={[['$12,000', 826.3], ['$10,000', 879.3], ['$8,000', 932.3], ['$6,000', 985.3], ['$4,000', 1038.3], ['$2,000', 1091.3], ['-', 1144.3]]}
                zero={1144.3}
                scale={0.0265}
                first={144}
                step={62.3}
                values={[4349, 6989, 6904, 7378, 7908, 9744, 10879, 10981, 11086, 11194]}
                fmt={money}
                catY={1163.5}
                axisX={424}
                axisY={1188}
              />
            </div>
            <div className="w-[721px] border-r-2 border-black">
              <ColumnChart
                vb={[756, 767, 719, 451]}
                title="Average CF / Customer"
                titleLen={211}
                titleX={1115.5}
                titleY={792}
                grid={[834.5, 1457]}
                tickX={817.5}
                ticks={[['$12,000', 826.3], ['$10,000', 865.3], ['$8,000', 904.3], ['$6,000', 942.3], ['$4,000', 981.3], ['$2,000', 1020.3], ['-', 1058.3], ['($2,000)', 1097.3], ['($4,000)', 1136.3], ['($6,000)', 1174.3]]}
                zero={1058.3}
                scale={0.0194}
                first={866}
                step={62.3}
                values={[-3601, 4286, 3839, 4614, 5260, 8177, 9795, 10048, 10385, 10818]}
                fmt={money}
                catY={1077}
                axisX={1146}
                axisY={1188}
              />
            </div>
          </div>
        </div>
      </div>
    </div>
  );
}

function VScroll() {
  return (
    <div className="w-[25px] shrink-0 bg-white flex">
      <div className="ml-[4px] w-[17px] bg-[#f3f3f3] rounded-full flex flex-col items-center pt-[6px]">
        <div className="w-0 h-0 border-x-[5px] border-x-transparent border-b-[8px] border-b-[#707070]" />
        <div className="mt-[746px] w-[10px] h-[274px] rounded-full bg-[#707070]" />
        <div className="mt-[3px] w-0 h-0 border-x-[5px] border-x-transparent border-t-[8px] border-t-[#707070]" />
      </div>
    </div>
  );
}

function TabSep() {
  return (
    <div className="w-[11px] h-[30px] flex items-center justify-center shrink-0">
      <div className="w-px h-[24px] bg-[#cfcfcf]" />
    </div>
  );
}

const COLOR_TABS = [
  ['Deployment', 118, 'bg-[#ffffcc] text-[#222]'],
  ['Schedules', 99, 'bg-[#ffffcc] text-[#222]'],
  ['Corporate Overheads', 189, 'bg-[#ffffcc] text-[#222]'],
  ['Executive Summary', 175, 'bg-[#7030a0] text-white'],
  ['Monthly Detail', 138, 'bg-[#7030a0] text-white'],
  ['Annual Detail', 127, 'bg-[#7030a0] text-white'],
  ['DCF Analysis', 121, 'bg-[#7030a0] text-white'],
];
const MONTH_TABS = [53, 57, 57, 58, 57, 56, 58, 57, 57, 64, 61, 64];

function Tabs() {
  return (
    <div className="h-[40px] bg-[#efefef] border-t border-[#dddddd] border-b-2 border-b-white flex pt-[4px] text-[16px]">
      <div className="w-[134px] flex items-center h-[30px] pl-[31px] gap-[29px] shrink-0">
        <svg width="10" height="18" viewBox="0 0 10 18"><path d="M8 1 2 9l6 8" fill="none" stroke="#999" strokeWidth="1.2" /></svg>
        <svg width="10" height="18" viewBox="0 0 10 18"><path d="M2 1l6 8-6 8" fill="none" stroke="#999" strokeWidth="1.2" /></svg>
      </div>
      <div className="w-[120px] h-[30px] pl-[6px] flex items-center justify-center text-[#222] shrink-0">Instructions</div>
      <TabSep />
      {COLOR_TABS.map(([t, w, c]) => (
        <Fragment key={t}>
          <div style={{ width: w }} className={`h-[30px] rounded-[5px] flex items-center justify-center shrink-0 whitespace-nowrap ${c}`}>{t}</div>
          <TabSep />
        </Fragment>
      ))}
      <div className="w-[75px] h-[35px] -mt-[5px] rounded-[6px] border-2 border-white bg-gradient-to-b from-white to-[#c9b2dc] flex flex-col items-center justify-end shrink-0 font-semibold text-[#222]">
        Visuals
        <div className="w-[56px] h-[3px] bg-[#107c41] mb-[2px] mt-[1px]" />
      </div>
      <div className="w-[6px] shrink-0" />
      {MONTH_TABS.map((w, i) => (
        <div key={i} style={{ width: w }} className="h-[24px] mt-[3px] border-l border-[#cfcfcf] flex items-center justify-center text-[#222] shrink-0">
          M{i + 1}
        </div>
      ))}
      <div className="w-px h-[24px] mt-[3px] bg-[#cfcfcf] shrink-0" />
      <div className="w-[50px] shrink-0" />
      <svg width="18" height="18" viewBox="0 0 18 18" className="mt-[5px] shrink-0">
        <path d="M9 2v14M2 9h14" stroke="#444" strokeWidth="1.500" />
      </svg>
      <div className="ml-[172px] mt-[5px] flex flex-col gap-[3px] shrink-0">
        <div className="w-[3px] h-[3px] bg-[#555]" />
        <div className="w-[3px] h-[3px] bg-[#555]" />
        <div className="w-[3px] h-[3px] bg-[#555]" />
      </div>
      <div className="ml-[19px] mt-[4px] w-[187px] h-[21px] bg-[#f5f5f5] rounded-full flex items-center justify-between px-[7px] shrink-0">
        <div className="w-0 h-0 border-y-[6px] border-y-transparent border-r-[8px] border-r-[#666]" />
        <div className="w-[140px] h-[12px] rounded-full bg-[#707070]" />
        <div className="w-0 h-0 border-y-[6px] border-y-transparent border-l-[8px] border-l-[#666]" />
      </div>
    </div>
  );
}

function StatusBar() {
  return (
    <div className="h-[27px] bg-[#f3f3f3] flex items-center pl-[14px] text-[13px] text-[#444]">
      <span className="w-[61px]">Ready</span>
      <svg width="18" height="20" viewBox="0 0 18 20">
        <path d="M1 1h15v17H1zM1 6h15" fill="none" stroke="#555" strokeWidth="1.2" />
        <circle cx="10" cy="13" r="4.500" fill="#fff" stroke="#333" strokeWidth="1.500" />
      </svg>
      <svg width="20" height="22" viewBox="0 0 20 22" className="ml-[22px]">
        <circle cx="10" cy="3.500" r="2.500" fill="none" stroke="#555" />
        <path d="M2 6l6 2v5l-5 8M18 6l-6 2v5l5 8M8 13h4" fill="none" stroke="#555" />
      </svg>
      <span className="ml-[3px] font-bold text-[12.500px] text-[#333]">Accessibility: Investigate</span>
      <div className="ml-auto flex items-center h-[27px]">
        <div className="w-[50px] h-[27px] bg-[#dedede] flex items-center justify-center">
          <svg width="17" height="17" viewBox="0 0 17 17"><path d="M.8.8h15.400v15.400H.8zM6 1v15M11 1v15M1 6h15M1 11h15" fill="none" stroke="#555" strokeWidth="1.300" /></svg>
        </div>
        <div className="w-[50px] flex justify-center">
          <svg width="17" height="17" viewBox="0 0 17 17"><path d="M.8.8h15.400v15.400H.8zM4 3.500h9v10H4zM6 6.500h5M6 9h5M6 11h5" fill="none" stroke="#555" strokeWidth="1.200" /></svg>
        </div>
        <div className="w-[50px] flex justify-center">
          <svg width="17" height="17" viewBox="0 0 17 17"><path d="M.8.8h15.400v15.400H.8zM1 11h9V1M12 1v10" fill="none" stroke="#555" strokeWidth="1.200" /></svg>
        </div>
        <div className="ml-[4px] w-[10px] h-px bg-[#555]" />
        <div className="ml-[7px] w-[125px] h-px bg-[#777] flex items-center justify-center">
          <div className="w-[5px] h-[16px] bg-[#666]" />
        </div>
        <svg width="10" height="10" viewBox="0 0 10 10" className="ml-[6px]"><path d="M5 0v10M0 5h10" stroke="#555" /></svg>
        <span className="ml-[16px] mr-[11px] text-[13px]">100%</span>
      </div>
    </div>
  );
}

function Petra() {
  return (
    <svg width="95" height="48" viewBox="0 0 95 48" className="shrink-0">
      <path d="M0 48 12 36 22 34 26 6 40 1h34l12 6 3 24 6 9v8z" fill="#9a6a45" />
      <path d="M28 8 41 3h31l11 6 2 39H26z" fill="#6e452a" />
      <path d="M31 10h47v38H31z" fill="#c08a63" />
      <path d="M34 12h12v9H34zM64 12h12v9H64zM49 8h12l2 13H47z" fill="#8c5a3b" />
      <path d="M31 22h47v3H31z" fill="#e1b08c" />
      <path d="M35 27h4v21h-4zM43 27h4v21h-4zM62 27h4v21h-4zM70 27h4v21h-4z" fill="#8a5535" />
      <path d="M50 29h9v19h-9z" fill="#2c2450" />
      <path d="M0 48 14 37l16 11z" fill="#d49b6e" />
    </svg>
  );
}

function TaskIcon({ children, active = true }) {
  return (
    <div className="w-[62px] h-[50px] flex flex-col items-center shrink-0">
      <div className="h-[47px] flex items-center justify-center">{children}</div>
      <div className={`w-[50px] h-[3px] ${active ? 'bg-[#0078d4]' : ''}`} />
    </div>
  );
}

function Taskbar() {
  return (
    <div className="h-[50px] bg-[#d0dfea] flex items-center text-[#222]">
      <svg width="21" height="21" viewBox="0 0 21 21" className="ml-[20px]">
        <path d="M0 3l9-1.300V10H0zM10 1.500 21 0v10H10zM0 11h9v8.300L0 18zM10 11h11v10l-11-1.500z" fill="#111" />
      </svg>
      <div className="ml-[20px] w-[359px] h-[48px] bg-white border border-[#cfcfcf] flex items-center pl-[14px] overflow-hidden">
        <svg width="20" height="24" viewBox="0 0 20 24">
          <circle cx="12" cy="9" r="7" fill="none" stroke="#333" strokeWidth="1.400" />
          <path d="M7 14 1 22" stroke="#333" strokeWidth="1.400" />
        </svg>
        <span className="ml-[14px] w-[181px] text-[17.500px] whitespace-nowrap">Type here to search</span>
        <div className="ml-[35px] mt-[2px]"><Petra /></div>
      </div>
      <svg width="18" height="22" viewBox="0 0 18 22" className="ml-[21px] mr-[23px]">
        <path d="M1 1h11M1 21h11M1 6h11v10H1zM16 2v3M16 8v6M16 17v3" fill="none" stroke="#222" strokeWidth="1.200" />
      </svg>
      <TaskIcon>
        <svg width="28" height="28" viewBox="0 0 28 28">
          <path d="M1 3h10l2 3h14v19H1z" fill="#ffc83d" />
          <path d="M1 6h26v4H1z" fill="#f9b233" />
          <path d="M9 19h10v8H9z" fill="#0f78d4" />
          <path d="M12 23h4v4h-4z" fill="#ffc83d" />
        </svg>
      </TaskIcon>
      <TaskIcon active={false}>
        <svg width="30" height="36" viewBox="0 0 30 36">
          <circle cx="13" cy="13" r="11" fill="#fff" stroke="#e77" strokeWidth="2" />
          <path d="M8 3l10 20M18 3 8 23" stroke="#999" />
          <circle cx="9" cy="30" r="4" fill="none" stroke="#2a7fc9" strokeWidth="2" />
          <circle cx="23" cy="30" r="4" fill="none" stroke="#2a7fc9" strokeWidth="2" />
          <path d="M11 26l5-8M21 26l-5-8" stroke="#2a7fc9" strokeWidth="2" />
        </svg>
      </TaskIcon>
      <TaskIcon>
        <svg width="28" height="32" viewBox="0 0 28 32">
          <ellipse cx="14" cy="16" rx="13" ry="15" fill="#e60012" />
          <ellipse cx="14" cy="16" rx="6" ry="12" fill="#fff" />
        </svg>
      </TaskIcon>
      <TaskIcon>
        <svg width="32" height="36" viewBox="0 0 32 36">
          <path d="M15 1a14 14 0 0 1 12 7H15a7 7 0 0 0-6 3L3 7a14 14 0 0 1 12-6z" fill="#ea4335" />
          <path d="M3 7l6 11a7 7 0 0 0 6 4l-4 7A14 14 0 0 1 3 7z" fill="#34a853" />
          <path d="M27 8a14 14 0 0 1-10 21l3-7a7 7 0 0 0 0-11z" fill="#fbbc04" />
          <circle cx="15" cy="15" r="6" fill="#4285f4" stroke="#fff" strokeWidth="1.500" />
          <circle cx="22" cy="26" r="9" fill="#c8c8c8" stroke="#888" />
          <path d="M15 26h14" stroke="#888" strokeWidth="2" />
        </svg>
      </TaskIcon>
      <TaskIcon>
        <div className="w-[26px] h-[26px] rounded-full bg-[#14a800] flex items-center justify-center text-white text-[13px] font-bold leading-none">up</div>
      </TaskIcon>
      <TaskIcon>
        <svg width="30" height="36" viewBox="0 0 30 36">
          <path d="M8 2h18l-4 32H3z" fill="#a9d6ef" stroke="#6ca4c9" />
          <path d="M10 2h18l-4 30H20z" fill="#e8f4fb" />
          <path d="M9 1h18" stroke="#557" strokeWidth="2" strokeDasharray="1 2" />
        </svg>
      </TaskIcon>
      <TaskIcon>
        <svg width="32" height="32" viewBox="0 0 32 32">
          <circle cx="17" cy="16" r="15" fill="#ed6c47" />
          <path d="M17 1a15 15 0 0 1 15 15H17z" fill="#ff8f6b" />
          <path d="M17 16h15a15 15 0 0 1-15 15z" fill="#d35230" />
          <rect y="8" width="15" height="16" rx="1.500" fill="#c43e1c" />
          <text x="3.500" y="21" className="text-[12px] font-bold fill-white">P</text>
        </svg>
      </TaskIcon>
      <TaskIcon>
        <svg width="32" height="34" viewBox="0 0 32 34">
          <path d="M8 1h22a2 2 0 0 1 2 2v28a2 2 0 0 1-2 2H8z" fill="#21a366" />
          <path d="M20 1h10a2 2 0 0 1 2 2v7H20z" fill="#33c481" />
          <path d="M8 17h24v16H8z" fill="#107c41" />
          <rect y="8" width="16" height="17" rx="1.500" fill="#185c37" />
          <text x="4" y="21" className="text-[12px] font-bold fill-white">X</text>
        </svg>
      </TaskIcon>
      <svg width="30" height="34" viewBox="0 0 30 34" className="ml-[1073px] shrink-0">
        <path d="M6 22a6 6 0 0 1 0-12 9 9 0 0 1 17-1 7 7 0 0 1 0 13z" fill="#b6d8f5" />
        <path d="M16 22h6l-2 9a3 3 0 0 1-6 0z" fill="#2b8fe8" />
        <circle cx="22" cy="8" r="7.500" fill="#c42b1c" />
        <text x="22" y="11.500" textAnchor="middle" className="text-[10px] font-bold fill-white">1</text>
      </svg>
      <span className="ml-[11px] w-[118px] whitespace-nowrap text-[17px]">70°F&nbsp;&nbsp;Light rain</span>
      <svg width="16" height="10" viewBox="0 0 16 10" className="ml-[32px]"><path d="M1 9l7-7 7 7" fill="none" stroke="#222" strokeWidth="1.200" /></svg>
      <svg width="16" height="22" viewBox="0 0 16 22" className="ml-[14px]">
        <rect x="1" y="5" width="11" height="12" rx="2" fill="none" stroke="#222" />
        <path d="M12 9l3-2v8l-3-2M4 2h6M4 20h6" fill="none" stroke="#222" />
      </svg>
      <svg width="22" height="18" viewBox="0 0 22 18" className="ml-[11px]">
        <path d="M1 6h4l5-4v14l-5-4H1zM13 6c2 2 2 4 0 6M16 3c4 4 4 8 0 12M19 1c5 5 5 11 0 16" fill="none" stroke="#222" />
      </svg>
      <svg width="20" height="20" viewBox="0 0 20 20" className="ml-[9px]">
        <path d="M5 3h15v11H5M4 14h4M12 14v4M8 18h8" fill="none" stroke="#222" />
        <rect x="1" y="1" width="4" height="8" fill="#fff" stroke="#222" />
      </svg>
      <div className="ml-[10px] w-[74px] flex flex-col items-center text-[14.500px] leading-[23px]">
        <span>5:28 PM</span>
        <span>6/26/2024</span>
      </div>
      <svg width="20" height="20" viewBox="0 0 20 20" className="ml-[20px]"><path d="M1 1h18v15h-7l-2 3-2-3H1z" fill="none" stroke="#222" strokeWidth="1.100" /></svg>
      <div className="ml-[15px] relative w-[26px] h-[28px]">
        <svg width="26" height="26" viewBox="0 0 26 26">
          <path d="M6 2h9c-5 2-6 8-6 14-1 6-4 8-7 8L1 20C2 12 2 5 6 2z" fill="#1b9de2" />
          <path d="M15 2c4 0 6 2 7 6l3 10c0 4-2 5-5 5h-9c4-3 4-8 4-12z" fill="#c46bd6" />
          <path d="M11 12h8l-3 11h-7z" fill="#f6c343" />
        </svg>
        <div className="absolute left-[6px] bottom-0 w-[18px] h-[9px] bg-[#ffc000] text-[7px] font-bold leading-[9px] text-center text-[#222]">PRE</div>
      </div>
    </div>
  );
}

export default function App() {
  return (
    <div className={`w-[2560px] h-[1440px] bg-[#efefef] flex flex-col overflow-hidden ${UI}`}>
      <TitleBar />
      <MenuBar />
      <Ribbon />
      <FormulaBar />
      <div className="h-[9px]" />
      <div className="h-[1051px] flex">
        <Sheet />
        <VScroll />
      </div>
      <Tabs />
      <StatusBar />
      <Taskbar />
    </div>
  );
}
